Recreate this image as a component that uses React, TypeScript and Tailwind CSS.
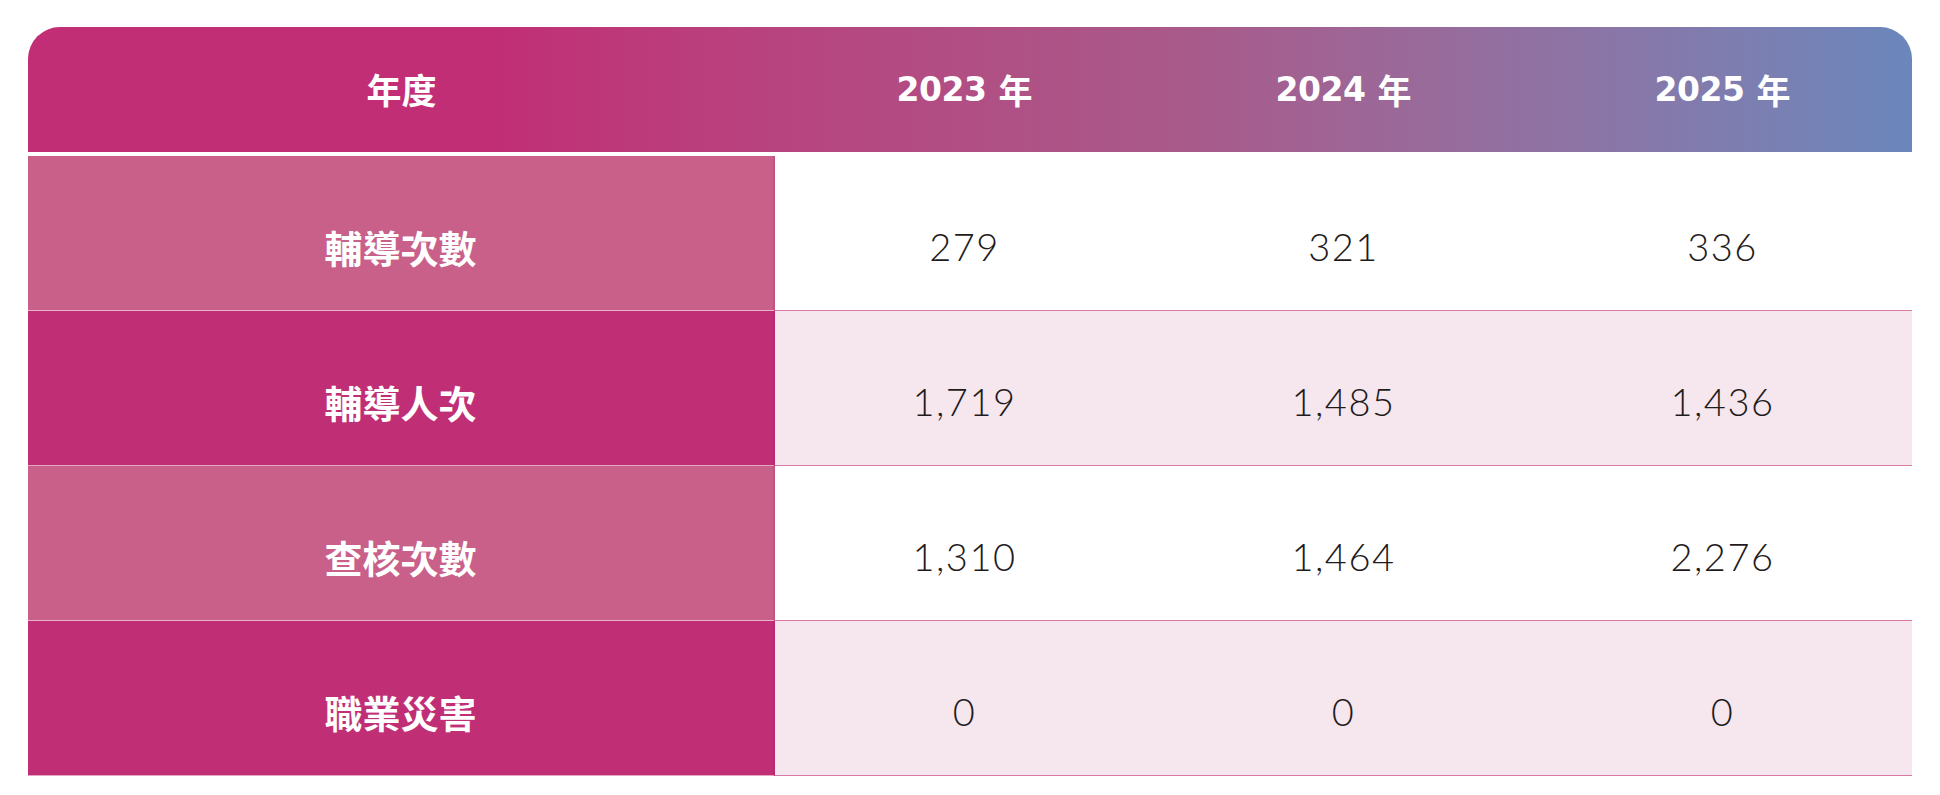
const rows = [
  { label: '輔導次數', values: ['279', '321', '336'] },
  { label: '輔導人次', values: ['1,719', '1,485', '1,436'] },
  { label: '查核次數', values: ['1,310', '1,464', '2,276'] },
  { label: '職業災害', values: ['0', '0', '0'] },
];

const years = ['2023', '2024', '2025'];

const cjk = "font-['Noto_Sans_CJK_TC','Noto_Sans_CJK_SC',sans-serif]";

export default function App() {
  return (
    <div className="min-h-[795px] w-[1940px] bg-white pl-[28px] pt-[27px]">
      <div className="w-[1884px]">
        {/* header */}
        <div className="grid h-[125px] grid-cols-[747px_1fr_1fr_1fr] rounded-t-[32px] bg-linear-to-r from-[#c12e76] from-[25%] via-[#a85a8b] via-[62%] to-[#6a87bc] text-white">
          <div className={`flex items-center justify-center text-[35px] font-bold ${cjk}`}>年度</div>
          {years.map(y => (
            <div key={y} className="flex items-center justify-center gap-[12px]">
              <span className="font-['DejaVu_Sans',sans-serif] text-[33px] font-bold tracking-[-0.5px]">{y}</span>
              <span className={`text-[34px] font-bold ${cjk}`}>年</span>
            </div>
          ))}
        </div>

        {/* body */}
        <div className="mt-[4px]">
          {rows.map((row, i) => {
            const odd = i % 2 === 1;
            return (
              <div key={row.label} className="grid h-[155px] grid-cols-[747px_1fr_1fr_1fr]">
                <div
                  className={`flex items-center justify-center border-b border-r-2 pt-[26px] text-[38px] font-bold text-white ${cjk} ${
                    odd ? 'border-b-[#e7a3c2] border-r-[#b92a6f] bg-[#c02f76]' : 'border-b-[#e9b3cb] border-r-[#c45384] bg-[#c9608a]'
                  }`}
                >
                  {row.label}
                </div>
                {row.values.map((v, j) => (
                  <div
                    key={j}
                    className={`flex items-center justify-center border-b border-[#d77aa3] pt-[26px] font-['Lato',sans-serif] text-[38px] font-light tracking-[1.5px] text-[#1f1b1c] ${
                      odd ? 'bg-[#f6e6ed]' : 'bg-white'
                    }`}
                  >
                    {v}
                  </div>
                ))}
              </div>
            );
          })}
        </div>
      </div>
    </div>
  );
}
